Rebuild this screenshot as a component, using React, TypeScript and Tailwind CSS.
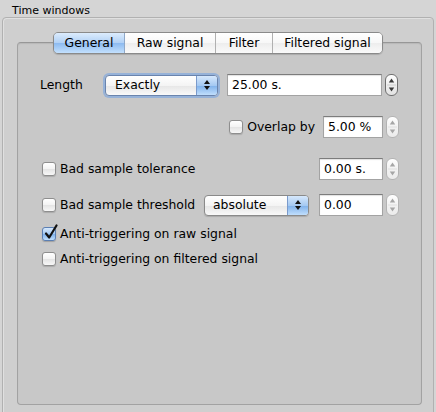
import React from "react";

const Stepper = ({ enabled }: { enabled: boolean }) => {
  const stroke = enabled ? "#6f6f6f" : "#b3b3b3";
  const arrow = enabled ? "#3a3a3a" : "#a6a6a6";
  const id = enabled ? "stepE" : "stepD";
  return (
    <svg width="13" height="22" viewBox="0 0 13 22" className="shrink-0">
      <defs>
        <linearGradient id={id} x1="0" y1="0" x2="0" y2="1">
          <stop offset="0" stopColor="#ffffff" />
          <stop offset="0.5" stopColor={enabled ? "#eeeeee" : "#f2f2f2"} />
          <stop offset="1" stopColor={enabled ? "#e2e2e2" : "#ebebeb"} />
        </linearGradient>
      </defs>
      <rect x="0.5" y="0.5" width="12" height="21" rx="5.5" fill={`url(#${id})`} stroke={stroke} />
      <line x1="2" y1="11" x2="11" y2="11" stroke={enabled ? "#d0d0d0" : "#e0e0e0"} />
      <path d="M6.5 4.5 L9.2 8.6 L3.8 8.6 Z" fill={arrow} />
      <path d="M6.5 17.5 L9.2 13.4 L3.8 13.4 Z" fill={arrow} />
    </svg>
  );
};

const PopArrows = () => (
  <svg width="8" height="12" viewBox="0 0 8 12">
    <path d="M4 1 L7 5 L1 5 Z" fill="#111" />
    <path d="M4 11 L7 7 L1 7 Z" fill="#111" />
  </svg>
);

const Check = ({ checked }: { checked?: boolean }) => (
  <div
    className={
      checked
        ? "relative h-[14px] w-[14px] shrink-0 rounded-[3px] border border-[#5b7fb3] bg-[linear-gradient(180deg,#d6e8fc_0%,#a2c7f1_50%,#7db0ea_51%,#bfdefc_100%)] shadow-[0_1px_1px_rgba(0,0,0,0.2)]"
        : "relative h-[14px] w-[14px] shrink-0 rounded-[3px] border border-[#8e8e8e] bg-[linear-gradient(180deg,#ffffff_0%,#f3f3f3_50%,#e4e4e4_51%,#f7f7f7_100%)] shadow-[0_1px_1px_rgba(0,0,0,0.15)]"
    }
  >
    {checked && (
      <svg
        width="16"
        height="17"
        viewBox="0 0 16 17"
        className="absolute left-[0px] top-[-4px]"
      >
        <path
          d="M3 9.5 L6.2 13.5 L13.5 1.5"
          fill="none"
          stroke="#111"
          strokeWidth="2.2"
          strokeLinecap="round"
          strokeLinejoin="round"
        />
      </svg>
    )}
  </div>
);

const Field = ({ text, w }: { text: string; w: string }) => (
  <div
    className={`flex h-[22px] ${w} shrink-0 items-center border border-[#a3a3a3] border-t-[#7c7c7c] bg-white pl-[4px] text-[12.4px] text-black shadow-[inset_0_1px_1px_rgba(0,0,0,0.12)]`}
  >
    {text}
  </div>
);

export default function App() {
  return (
    <div className="h-[412px] w-[436px] overflow-hidden bg-[#d5d5d5] font-['DejaVu_Sans',sans-serif] text-black">
      <div className="h-[17px] pl-[12px] pt-[5px] text-[11px] leading-[12px]">Time windows</div>
      <div className="ml-[2px] h-[420px] w-[432px] rounded-[4px] border border-[#b1b1b1] bg-[#cfcfcf] pl-[14px] pt-[24px] shadow-[inset_1px_1px_0_rgba(255,255,255,0.35)]">
        <div className="h-[363px] w-[405px] rounded-[4px] border border-[#a2a2a2] border-t-[#979797] bg-[#c8c8c8] shadow-[inset_0_1px_1px_rgba(0,0,0,0.08)]">
          {/* tabs */}
          <div className="ml-[35px] mt-[-11px] flex h-[22px] w-[330px] overflow-hidden rounded-[5px] border border-[#8a8a8a] text-[12.4px] shadow-[0_1px_1px_rgba(0,0,0,0.15)]">
            <div className="flex w-[71px] items-center justify-center border-r border-[#8fa8c8] bg-[linear-gradient(180deg,#dcecfd_0%,#b0d0f5_50%,#8cbaf0_51%,#c3e0fd_100%)]">
              General
            </div>
            <div className="flex w-[91px] items-center justify-center border-r border-[#b0b0b0] bg-[linear-gradient(180deg,#ffffff_0%,#f7f7f7_50%,#ededed_51%,#fafafa_100%)]">
              Raw signal
            </div>
            <div className="flex w-[57px] items-center justify-center border-r border-[#b0b0b0] bg-[linear-gradient(180deg,#ffffff_0%,#f7f7f7_50%,#ededed_51%,#fafafa_100%)]">
              Filter
            </div>
            <div className="flex flex-1 items-center justify-center bg-[linear-gradient(180deg,#ffffff_0%,#f7f7f7_50%,#ededed_51%,#fafafa_100%)]">
              Filtered signal
            </div>
          </div>

          <div className="px-[22px] text-[12.4px]">
            {/* Length row */}
            <div className="mt-[20px] flex h-[22px] items-center">
              <div className="w-[65px]">Length</div>
              <div className="flex h-[21px] w-[113px] items-center overflow-hidden rounded-[4px] border border-[#6a84ad] bg-[linear-gradient(180deg,#ffffff_0%,#f4f4f4_50%,#e6e6e6_51%,#f9f9f9_100%)] shadow-[0_0_0_2px_rgba(110,160,230,0.55)]">
                <div className="flex-1 pl-[9px]">Exactly</div>
                <div className="flex h-full w-[21px] items-center justify-center border-l border-[#7a9acb] bg-[linear-gradient(180deg,#d6e8fc_0%,#a5c9f2_50%,#7fb1eb_51%,#c0defc_100%)]">
                  <PopArrows />
                </div>
              </div>
              <div className="ml-[9px]">
                <Field text="25.00 s." w="w-[155px]" />
              </div>
              <div className="ml-[3px]">
                <Stepper enabled />
              </div>
            </div>

            {/* Overlap row */}
            <div className="mt-[20px] flex h-[22px] items-center justify-end">
              <Check />
              <div className="ml-[4px]">Overlap by</div>
              <div className="ml-[8px]">
                <Field text="5.00 %" w="w-[60px]" />
              </div>
              <div className="ml-[3px]">
                <Stepper enabled={false} />
              </div>
            </div>

            {/* Bad sample tolerance */}
            <div className="mt-[20px] flex h-[22px] items-center">
              <div className="ml-[2px]">
                <Check />
              </div>
              <div className="ml-[4px]">Bad sample tolerance</div>
              <div className="ml-auto">
                <Field text="0.00 s." w="w-[64px]" />
              </div>
              <div className="ml-[3px]">
                <Stepper enabled={false} />
              </div>
            </div>

            {/* Bad sample threshold */}
            <div className="mt-[14px] flex h-[22px] items-center">
              <div className="ml-[2px]">
                <Check />
              </div>
              <div className="ml-[4px]">Bad sample threshold</div>
              <div className="ml-auto flex h-[21px] w-[105px] items-center overflow-hidden rounded-[4px] border border-[#8a8a8a] bg-[linear-gradient(180deg,#ffffff_0%,#f4f4f4_50%,#e6e6e6_51%,#f9f9f9_100%)] shadow-[0_1px_1px_rgba(0,0,0,0.15)]">
                <div className="flex-1 pl-[8px]">absolute</div>
                <div className="flex h-full w-[21px] items-center justify-center border-l border-[#7a9acb] bg-[linear-gradient(180deg,#d6e8fc_0%,#a5c9f2_50%,#7fb1eb_51%,#c0defc_100%)]">
                  <PopArrows />
                </div>
              </div>
              <div className="ml-[10px]">
                <Field text="0.00" w="w-[64px]" />
              </div>
              <div className="ml-[3px]">
                <Stepper enabled={false} />
              </div>
            </div>

            {/* Anti-triggering raw */}
            <div className="mt-[7px] flex h-[22px] items-center">
              <div className="ml-[2px]">
                <Check checked />
              </div>
              <div className="ml-[4px]">Anti-triggering on raw signal</div>
            </div>

            {/* Anti-triggering filtered */}
            <div className="mt-[3px] flex h-[22px] items-center">
              <div className="ml-[2px]">
                <Check />
              </div>
              <div className="ml-[4px]">Anti-triggering on filtered signal</div>
            </div>
          </div>
        </div>
      </div>
    </div>
  );
}
